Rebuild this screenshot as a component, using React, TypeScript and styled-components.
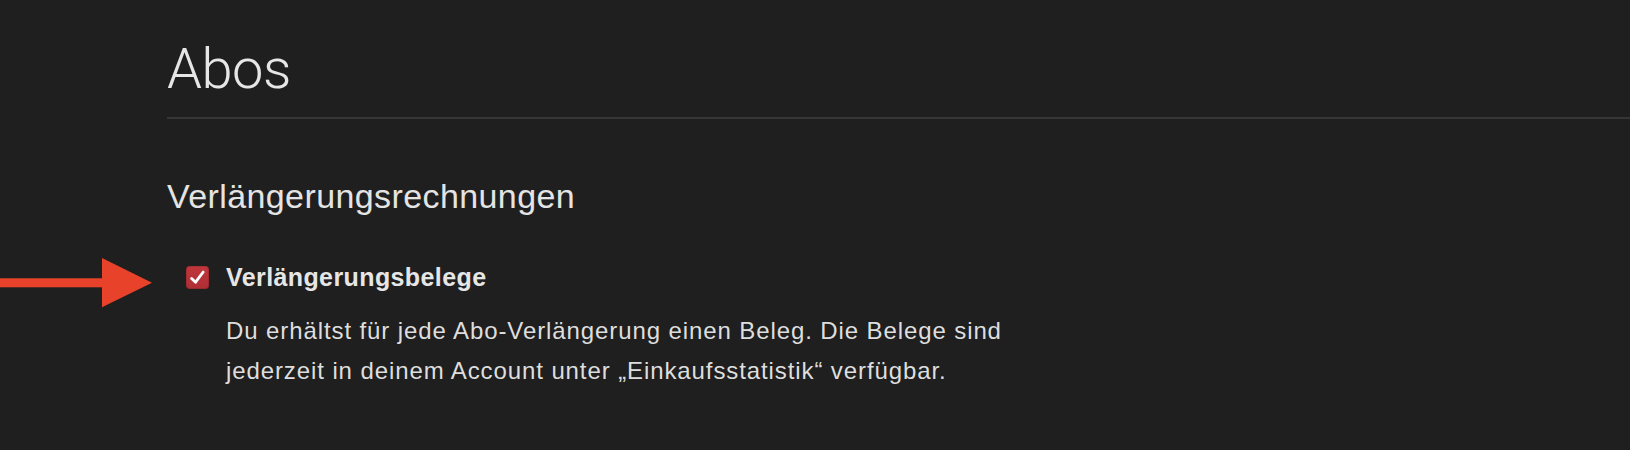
import React from "react";
import styled, { createGlobalStyle } from "styled-components";

const GlobalStyle = createGlobalStyle`
  html, body {
    margin: 0;
    padding: 0;
    background: #1f1f1f;
  }
  body {
    font-family: "Liberation Sans", Arial, sans-serif;
    color: #e4e4e4;
  }
`;

const Page = styled.main`
  position: relative;
  min-height: 450px;
  padding: 37px 0 0 167px;
  box-sizing: border-box;
`;

const Title = styled.h1`
  margin: 0;
  font-family: "Roboto", "Liberation Sans", sans-serif;
  font-weight: 300;
  font-size: 56px;
  line-height: 64px;
  color: #e6e6e6;
  letter-spacing: -0.5px;
`;

const Divider = styled.hr`
  margin: 16px 0 0 0;
  border: 0;
  height: 2px;
  background: #363636;
`;

const SectionTitle = styled.h2`
  margin: 57px 0 0 0;
  font-weight: 400;
  font-size: 34px;
  line-height: 40px;
  letter-spacing: 0.4px;
  color: #e4e4e4;
`;

const OptionRow = styled.label`
  display: flex;
  align-items: center;
  gap: 17px;
  margin: 46px 0 0 19px;
`;

const CheckBox = styled.span`
  display: flex;
  align-items: center;
  justify-content: center;
  width: 23px;
  height: 23px;
  border-radius: 4px;
  background: linear-gradient(#c0363c, #ae2f35);
  box-shadow: inset 0 0 0 1px rgba(0, 0, 0, 0.12);
`;

const OptionLabel = styled.span`
  font-weight: 700;
  font-size: 25px;
  line-height: 30px;
  letter-spacing: 0.4px;
  color: #e6e6e6;
`;

const Description = styled.p`
  margin: 19px 0 0 59px;
  max-width: 820px;
  font-size: 24px;
  line-height: 40px;
  letter-spacing: 0.9px;
  color: #dedede;
`;

const Pointer = styled.svg`
  position: absolute;
  left: 0;
  top: 258px;
`;

export default function App() {
  return (
    <>
      <GlobalStyle />
      <Page>
        <Title>Abos</Title>
        <Divider />
        <SectionTitle>Verlängerungsrechnungen</SectionTitle>
        <OptionRow>
          <CheckBox>
            <svg width="17" height="17" viewBox="0 0 17 17">
              <path
                d="M2.6 9.4 L6.6 13.2 L14.2 3"
                fill="none"
                stroke="#ffffff"
                strokeWidth="2.8"
                strokeLinecap="round"
                strokeLinejoin="round"
              />
            </svg>
          </CheckBox>
          <OptionLabel>Verlängerungsbelege</OptionLabel>
        </OptionRow>
        <Description>
          Du erhältst für jede Abo-Verlängerung einen Beleg. Die Belege sind
          jederzeit in deinem Account unter „Einkaufsstatistik“ verfügbar.
        </Description>
        <Pointer width="152" height="50" viewBox="0 0 152 50">
          <rect x="0" y="20.3" width="103" height="9" fill="#e8432a" />
          <polygon points="102,0 152,24.7 102,49.3" fill="#e8432a" />
        </Pointer>
      </Page>
    </>
  );
}
